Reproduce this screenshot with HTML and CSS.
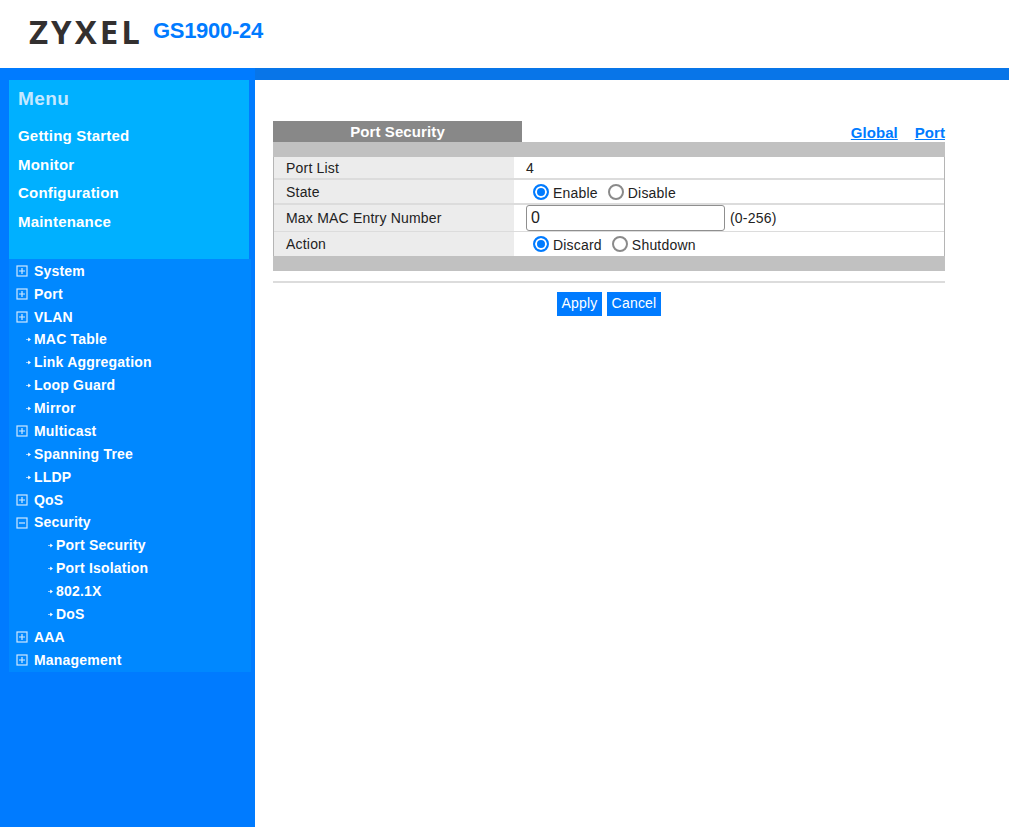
FILE: index.html
```html
<!DOCTYPE html>
<html lang="en">
<head>
    <meta charset="UTF-8">
    <title>GS1900-24</title>
    <link rel="stylesheet" href="styles.css">
</head>
<body>
    <!-- Header -->
    <div class="header">
        <span class="logo">ZYXEL</span>
        <span class="model">GS1900-24</span>
    </div>
    <div class="strip"></div>

    <div class="main">
        <!-- Sidebar -->
        <div class="sidebar">
            <div class="menu-box">
                <div class="menu-title">Menu</div>
                <a class="menu-link">Getting Started</a>
                <a class="menu-link">Monitor</a>
                <a class="menu-link">Configuration</a>
                <a class="menu-link">Maintenance</a>
            </div>
            <div class="tree">
                <div class="tree-item"><svg class="toggle" viewBox="0 0 12 12"><rect x="1" y="1" width="10" height="10"/><path d="M3 6h6M6 3v6"/></svg>System</div>
                <div class="tree-item"><svg class="toggle" viewBox="0 0 12 12"><rect x="1" y="1" width="10" height="10"/><path d="M3 6h6M6 3v6"/></svg>Port</div>
                <div class="tree-item"><svg class="toggle" viewBox="0 0 12 12"><rect x="1" y="1" width="10" height="10"/><path d="M3 6h6M6 3v6"/></svg>VLAN</div>
                <div class="tree-item"><svg class="arrow" viewBox="0 0 5 5"><path d="M0 2.5h3M2.5 1l2 1.5-2 1.5z"/></svg>MAC Table</div>
                <div class="tree-item"><svg class="arrow" viewBox="0 0 5 5"><path d="M0 2.5h3M2.5 1l2 1.5-2 1.5z"/></svg>Link Aggregation</div>
                <div class="tree-item"><svg class="arrow" viewBox="0 0 5 5"><path d="M0 2.5h3M2.5 1l2 1.5-2 1.5z"/></svg>Loop Guard</div>
                <div class="tree-item"><svg class="arrow" viewBox="0 0 5 5"><path d="M0 2.5h3M2.5 1l2 1.5-2 1.5z"/></svg>Mirror</div>
                <div class="tree-item"><svg class="toggle" viewBox="0 0 12 12"><rect x="1" y="1" width="10" height="10"/><path d="M3 6h6M6 3v6"/></svg>Multicast</div>
                <div class="tree-item"><svg class="arrow" viewBox="0 0 5 5"><path d="M0 2.5h3M2.5 1l2 1.5-2 1.5z"/></svg>Spanning Tree</div>
                <div class="tree-item"><svg class="arrow" viewBox="0 0 5 5"><path d="M0 2.5h3M2.5 1l2 1.5-2 1.5z"/></svg>LLDP</div>
                <div class="tree-item"><svg class="toggle" viewBox="0 0 12 12"><rect x="1" y="1" width="10" height="10"/><path d="M3 6h6M6 3v6"/></svg>QoS</div>
                <div class="tree-item"><svg class="toggle" viewBox="0 0 12 12"><rect x="1" y="1" width="10" height="10"/><path d="M3 6h6"/></svg>Security</div>
                <div class="tree-item sub"><svg class="arrow" viewBox="0 0 5 5"><path d="M0 2.5h3M2.5 1l2 1.5-2 1.5z"/></svg>Port Security</div>
                <div class="tree-item sub"><svg class="arrow" viewBox="0 0 5 5"><path d="M0 2.5h3M2.5 1l2 1.5-2 1.5z"/></svg>Port Isolation</div>
                <div class="tree-item sub"><svg class="arrow" viewBox="0 0 5 5"><path d="M0 2.5h3M2.5 1l2 1.5-2 1.5z"/></svg>802.1X</div>
                <div class="tree-item sub"><svg class="arrow" viewBox="0 0 5 5"><path d="M0 2.5h3M2.5 1l2 1.5-2 1.5z"/></svg>DoS</div>
                <div class="tree-item"><svg class="toggle" viewBox="0 0 12 12"><rect x="1" y="1" width="10" height="10"/><path d="M3 6h6M6 3v6"/></svg>AAA</div>
                <div class="tree-item"><svg class="toggle" viewBox="0 0 12 12"><rect x="1" y="1" width="10" height="10"/><path d="M3 6h6M6 3v6"/></svg>Management</div>
            </div>
        </div>

        <!-- Port Security form -->
        <div class="content">
            <div class="tab-row">
                <div class="tab-title">Port Security</div>
                <div class="tab-links">
                    <a href="#">Global</a>
                    <a href="#">Port</a>
                </div>
            </div>
            <div class="band"></div>
            <div class="form-rows">
                <div class="row row-list">
                    <div class="label">Port List</div>
                    <div class="value value-text">4</div>
                </div>
                <div class="row row-state">
                    <div class="label">State</div>
                    <div class="value value-radio">
                        <span class="radio on"></span><span class="radio-text">Enable</span>
                        <span class="radio"></span><span class="radio-text">Disable</span>
                    </div>
                </div>
                <div class="row row-max">
                    <div class="label">Max MAC Entry Number</div>
                    <div class="value value-input">
                        <input class="text-input" type="text" value="0">
                        <span class="hint">(0-256)</span>
                    </div>
                </div>
                <div class="row row-action">
                    <div class="label">Action</div>
                    <div class="value value-radio">
                        <span class="radio on"></span><span class="radio-text">Discard</span>
                        <span class="radio"></span><span class="radio-text">Shutdown</span>
                    </div>
                </div>
            </div>
            <div class="band"></div>
            <div class="rule"></div>
            <div class="buttons">
                <button class="btn btn-apply">Apply</button>
                <button class="btn btn-cancel">Cancel</button>
            </div>
        </div>
    </div>
</body>
</html>
```

FILE: styles.css
```css
/* General Styles */
html, body {
    height: 100%;
}

body {
    margin: 0;
    background-color: #fff;
    color: #222;
    font-family: 'Liberation Sans', Arial, sans-serif;
    font-size: 14px;
    letter-spacing: 0.2px;
    display: flex;
    flex-direction: column;
    overflow: hidden;
}

/* Header */
.header {
    height: 68px;
    flex: none;
    display: flex;
    align-items: center;
    padding-bottom: 5px;
    box-sizing: border-box;
    background-color: #fff;
}

.logo {
    margin-left: 29px;
    width: 124px;
    font-family: 'Open Sans', sans-serif;
    font-size: 33px;
    font-weight: 700;
    letter-spacing: 3px;
    color: #333030;
    line-height: 1;
}

.model {
    margin-bottom: 2px;
    font-size: 22px;
    font-weight: 700;
    color: #007bff;
    letter-spacing: -0.3px;
}

.strip {
    height: 12px;
    flex: none;
    background: linear-gradient(to right, #007bff 255px, #0875e8 255px);
}

.main {
    flex: 1;
    display: flex;
    min-height: 0;
}

/* Sidebar */
.sidebar {
    width: 255px;
    flex: none;
    background-color: #007bff;
    padding-left: 9px;
    box-sizing: border-box;
}

.menu-box {
    width: 240px;
    height: 179px;
    box-sizing: border-box;
    padding: 7px 0 0 9px;
    background-color: #00b0ff;
}

.menu-title {
    height: 27px;
    line-height: 23px;
    font-size: 19px;
    font-weight: 700;
    letter-spacing: 0.4px;
    color: #c5e8ff;
    margin-bottom: 8px;
}

.menu-link {
    display: block;
    height: 28.7px;
    line-height: 28.7px;
    font-size: 15px;
    font-weight: 700;
    color: #fff;
}

.tree {
    width: 242px;
    height: 413px;
    padding-top: 0.83px;
    box-sizing: border-box;
    background-color: #0088ff;
}

.tree-item {
    height: 22.88px;
    line-height: 22.88px;
    padding-left: 25px;
    font-size: 14px;
    font-weight: 700;
    color: #fff;
    display: flex;
    align-items: center;
}

.tree-item.sub {
    padding-left: 47px;
}

.toggle {
    width: 12px;
    height: 12px;
    margin-left: -18px;
    margin-right: 6px;
    fill: none;
    stroke: #cfe8ff;
    stroke-width: 1.2;
}

.arrow {
    width: 5px;
    height: 5px;
    margin-left: -8px;
    margin-right: 3px;
    fill: #fff;
    stroke: #fff;
    stroke-width: 0.6;
}

/* Form */
.content {
    width: 672px;
    margin: 41px 0 0 18px;
}

.tab-row {
    height: 21px;
    display: flex;
    justify-content: space-between;
    align-items: center;
}

.tab-title {
    width: 249px;
    height: 21px;
    line-height: 22px;
    text-align: center;
    background-color: #888;
    color: #fff;
    font-size: 15px;
    font-weight: 700;
    letter-spacing: 0.1px;
}

.tab-links {
    display: flex;
    gap: 17px;
    margin-top: 2px;
}

.tab-links a {
    color: #007bff;
    font-size: 15px;
    font-weight: 700;
    letter-spacing: 0.05px;
}

.band {
    height: 15px;
    background-color: #c1c1c1;
}

.form-rows {
    border-right: 1px solid #b5b5b5;
    border-left: 1px solid #b5b5b5;
}

.row {
    display: flex;
    box-sizing: border-box;
    border-bottom: 2px solid #dcdcdc;
}

.row-list { height: 23px; }
.row-state { height: 25px; }
.row-max { height: 27px; border-bottom-width: 1px; }
.row-action { height: 24px; border-bottom: none; }

.label {
    width: 240px;
    flex: none;
    padding-left: 12px;
    box-sizing: border-box;
    background-color: #ececec;
    display: flex;
    align-items: center;
}

.value {
    flex: 1;
    display: flex;
    align-items: center;
}

.value-text,
.value-input {
    padding-left: 12px;
}

.value-radio {
    padding-left: 19px;
}

.radio {
    width: 16px;
    height: 16px;
    flex: none;
    box-sizing: border-box;
    border: 2px solid #8a8a8a;
    border-radius: 50%;
    background-color: #fff;
}

.radio.on {
    border: 2px solid #007bff;
    background-color: #007bff;
    box-shadow: inset 0 0 0 2px #fff;
}

.radio-text {
    margin: 2px 10px 0 4px;
}

.text-input {
    width: 199px;
    height: 26px;
    box-sizing: border-box;
    padding: 0 4px;
    border: 1px solid #8f8f8f;
    border-radius: 3px;
    background-color: #fff;
    color: #222;
    font-family: 'Liberation Sans', Arial, sans-serif;
    font-size: 16px;
}

.hint {
    margin-left: 5px;
}

.rule {
    height: 2px;
    margin-top: 10px;
    background-color: #dcdcdc;
}

.buttons {
    display: flex;
    justify-content: center;
    gap: 5px;
    margin-top: 9px;
}

.btn {
    height: 24px;
    padding: 0 0 2px;
    border: none;
    background-color: #007bff;
    color: #fff;
    font-family: 'Liberation Sans', Arial, sans-serif;
    font-size: 14px;
    letter-spacing: 0.2px;
}

.btn-apply { width: 45px; }
.btn-cancel { width: 54px; }
```
